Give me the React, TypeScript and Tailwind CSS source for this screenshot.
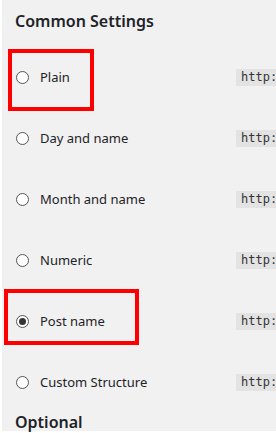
import React from 'react';

type Option = {
    label: string;
    url: string;
    checked?: boolean;
    mark?: 'plain' | 'post';
};

const options: Option[] = [
    { label: 'Plain', url: 'http://localhost/wordpress/?p=123', mark: 'plain' },
    { label: 'Day and name', url: 'http://localhost/wordpress/2018/05/21/sample-post/' },
    { label: 'Month and name', url: 'http://localhost/wordpress/2018/05/sample-post/' },
    { label: 'Numeric', url: 'http://localhost/wordpress/archives/123' },
    { label: 'Post name', url: 'http://localhost/wordpress/sample-post/', checked: true, mark: 'post' },
    { label: 'Custom Structure', url: 'http://localhost/wordpress' },
];

const Radio = ({ checked }: { checked?: boolean }) => (
    <span className="flex h-[13px] w-[13px] shrink-0 items-center justify-center rounded-full border border-[#555] bg-white">
        {checked && <span className="h-[7px] w-[7px] rounded-full bg-[#333]"></span>}
    </span>
);

const App = () => {
    return (
        <div className="h-[433px] w-[276px] overflow-hidden bg-white pb-[2px] pl-[2px]" style={{ fontFamily: '"Noto Sans", "Open Sans", sans-serif' }}>
            <div className="flex h-[431px] flex-col bg-[#f1f1f1] text-[#1d2327]">

                <div className="flex h-[47px] shrink-0 items-center pl-[13px] pb-[6px]">
                    <h2 className="text-[16px] font-semibold leading-none">Common Settings</h2>
                </div>

                {options.map((o) => (
                    <div key={o.label} className="relative grid h-[61px] shrink-0 grid-cols-[220px_1fr] items-center pl-[14px]">
                        <label className="flex items-center gap-[11px] text-[13px]">
                            <Radio checked={o.checked} />
                            <span>{o.label}</span>
                        </label>
                        <code
                            className="block h-[17px] whitespace-nowrap bg-[#e3e3e3] px-[5px] text-[12px] leading-[17px] text-[#333]"
                            style={{ fontFamily: '"DejaVu Sans Mono", "Liberation Mono", monospace' }}
                        >
                            {o.url}
                        </code>

                        {o.mark === 'plain' && (
                            <div className="pointer-events-none absolute left-[6px] top-[2px] h-[62px] w-[86px] border-4 border-[#ff0000]"></div>
                        )}
                        {o.mark === 'post' && (
                            <div className="pointer-events-none absolute left-[2px] top-[-2px] h-[56px] w-[135px] border-4 border-[#ff0000]"></div>
                        )}
                    </div>
                ))}

                <div className="flex h-[18px] items-start pl-[13px]">
                    <h2 className="text-[16px] font-semibold leading-[18px]">Optional</h2>
                </div>
            </div>
        </div>
    );
};

export default App;
